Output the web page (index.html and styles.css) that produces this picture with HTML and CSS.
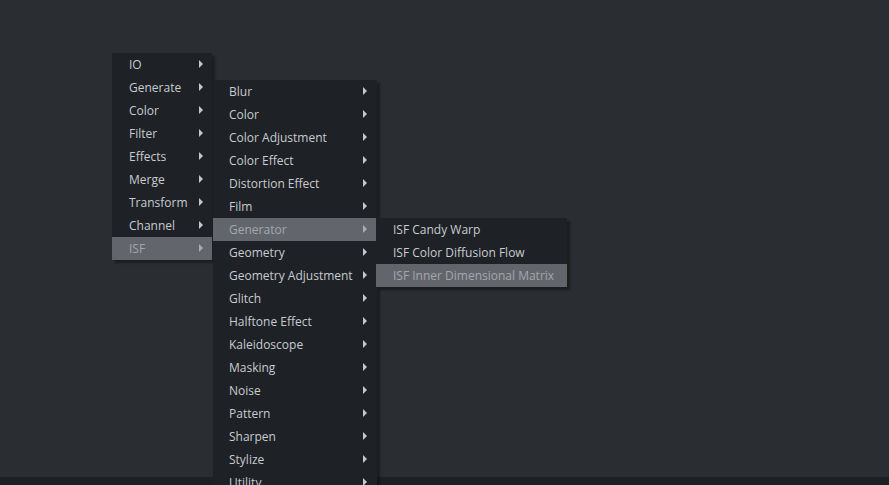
FILE: index.html
```html
<!DOCTYPE html>
<html>
<head>
<meta charset="utf-8">
<link rel="stylesheet" href="styles.css">
</head>
<body>
<div class="workspace"></div>
<div class="statusbar"></div>

<ul class="menu menu-root">
  <li class="item">IO<span class="arrow"></span></li>
  <li class="item">Generate<span class="arrow"></span></li>
  <li class="item">Color<span class="arrow"></span></li>
  <li class="item">Filter<span class="arrow"></span></li>
  <li class="item">Effects<span class="arrow"></span></li>
  <li class="item">Merge<span class="arrow"></span></li>
  <li class="item">Transform<span class="arrow"></span></li>
  <li class="item">Channel<span class="arrow"></span></li>
  <li class="item active">ISF<span class="arrow"></span></li>
</ul>

<ul class="menu menu-isf">
  <li class="item">Blur<span class="arrow"></span></li>
  <li class="item">Color<span class="arrow"></span></li>
  <li class="item">Color Adjustment<span class="arrow"></span></li>
  <li class="item">Color Effect<span class="arrow"></span></li>
  <li class="item">Distortion Effect<span class="arrow"></span></li>
  <li class="item">Film<span class="arrow"></span></li>
  <li class="item active">Generator<span class="arrow"></span></li>
  <li class="item">Geometry<span class="arrow"></span></li>
  <li class="item">Geometry Adjustment<span class="arrow"></span></li>
  <li class="item">Glitch<span class="arrow"></span></li>
  <li class="item">Halftone Effect<span class="arrow"></span></li>
  <li class="item">Kaleidoscope<span class="arrow"></span></li>
  <li class="item">Masking<span class="arrow"></span></li>
  <li class="item">Noise<span class="arrow"></span></li>
  <li class="item">Pattern<span class="arrow"></span></li>
  <li class="item">Sharpen<span class="arrow"></span></li>
  <li class="item">Stylize<span class="arrow"></span></li>
  <li class="item">Utility<span class="arrow"></span></li>
</ul>

<ul class="menu menu-gen">
  <li class="item">ISF Candy Warp</li>
  <li class="item">ISF Color Diffusion Flow</li>
  <li class="item active">ISF Inner Dimensional Matrix</li>
</ul>
</body>
</html>
```

FILE: styles.css
```css
html, body {
  margin: 0;
  padding: 0;
  height: 100%;
  overflow: hidden;
}

body {
  background: #2a2d31;
  font-family: "Open Sans", "Noto Sans", sans-serif;
  font-size: 12px;
  color: #c8ccd1;
  display: flex;
  flex-direction: column;
}

.workspace {
  flex: 1;
}

.statusbar {
  height: 8px;
  background: #1e2124;
}

.menu {
  position: absolute;
  list-style: none;
  margin: 0;
  padding: 0;
  background: #1e2125;
  box-shadow: 3px 3px 2px rgba(0, 0, 0, 0.35);
}

.menu-root {
  left: 112px;
  top: 53px;
  width: 100px;
}

.menu-isf {
  left: 213px;
  top: 80px;
  width: 164px;
}

.menu-gen {
  left: 376px;
  top: 218px;
  width: 191px;
}

.item {
  position: relative;
  height: 23px;
  line-height: 23px;
  padding-left: 17px;
  white-space: nowrap;
}

.menu-isf .item {
  padding-left: 16px;
}

.item.active {
  background: #62666c;
  color: #a3a7ac;
}

.arrow {
  position: absolute;
  right: 9px;
  top: 7px;
  width: 0;
  height: 0;
  border-top: 4px solid transparent;
  border-bottom: 4px solid transparent;
  border-left: 4px solid #c4c7cb;
}

.menu-isf .arrow {
  right: 10px;
}

.item.active .arrow {
  border-left-color: #a9adb1;
}
```
